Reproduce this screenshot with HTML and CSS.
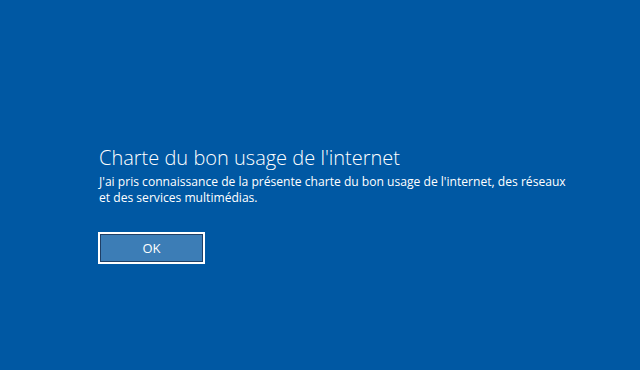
FILE: index.html
```html
<!DOCTYPE html>
<html lang="fr">
<head>
  <meta charset="UTF-8" />
  <title>Charte</title>
  <link rel="stylesheet" href="styles.css">
</head>
<body>
  <div class="notice">
    <h1 class="title">Charte du bon usage de l'internet</h1>
    <p class="text">J'ai pris connaissance de la présente charte du bon usage de l'internet, des réseaux<br>et des services multimédias.</p>
    <button class="ok">OK</button>
  </div>
</body>
</html>
```

FILE: styles.css
```css
body {
  margin: 0;
  background: #0058a3;
  color: #fff;
  font-family: 'Open Sans', sans-serif;
  height: 370px;
  overflow: hidden;
}
.notice {
  padding: 145px 0 0 99px;
}
.title {
  margin: 0;
  font-size: 20px;
  font-weight: 300;
  line-height: 26px;
}
.text {
  margin: 3px 0 0;
  font-size: 12.1px;
  line-height: 16px;
}
.ok {
  display: block;
  margin-top: 26px;
  margin-left: -1px;
  width: 107px;
  height: 32px;
  background: #3c7db6;
  color: #fff;
  border: 2px solid #fff;
  box-shadow: inset 0 0 0 1px #1f3f66;
  font-family: 'Open Sans', sans-serif;
  font-size: 13px;
  padding: 0;
}
```
